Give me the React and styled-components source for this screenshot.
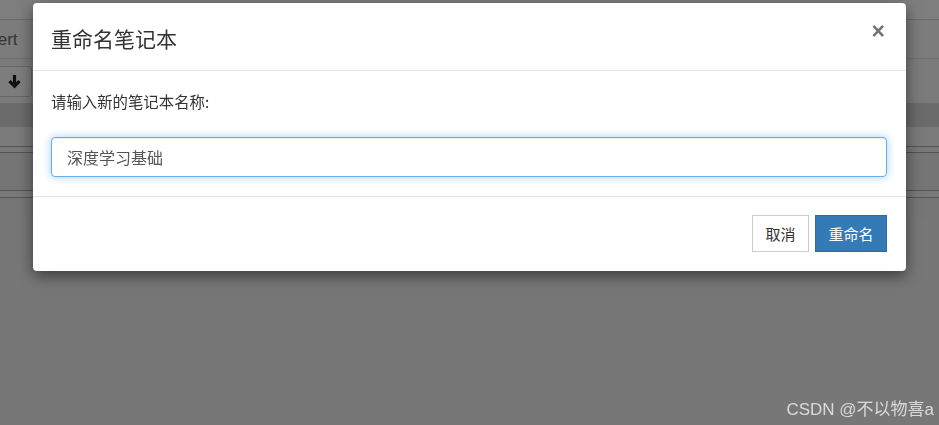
import styled, { createGlobalStyle } from "styled-components"

const GlobalStyle = createGlobalStyle`
    html, body, #root {
        height: 100%;
    }
    body {
        margin: 0;
        font-family: "Liberation Sans", "Noto Sans CJK SC", sans-serif;
        color: #333;
        overflow: hidden;
    }
`

const Page = styled.div`
    position: relative;
    height: 100%;
    background: #eeeeee;
    display: flex;
    flex-direction: column;
`

const TopStrip = styled.div`
    height: 19px;
    background: #fdfdfd;
    border-bottom: 1px solid #d0d0d0;
`

const MenuBar = styled.div`
    height: 38px;
    background: #f8f8f8;
    border-bottom: 1px solid #e0e0e0;
    display: flex;
    align-items: center;
    gap: 24px;
`

const MenuItem = styled.span`
    font-size: 17px;
    color: #6a6a6a;
    padding-top: 2px;
    &:first-child {
        margin-left: -25px;
    }
`

const Toolbar = styled.div`
    height: 44px;
    background: #f6f6f6;
    display: flex;
    align-items: center;
`

const ToolButton = styled.div`
    width: 34px;
    height: 29px;
    margin-left: -4px;
    border: 1px solid #ccc;
    border-radius: 3px;
    background: #fafafa;
    display: flex;
    align-items: center;
    justify-content: center;
`

const Band = styled.div`
    height: ${p => p.h}px;
    background: ${p => p.bg};
    border-bottom: ${p => p.line ? "1px solid #a8a8a8" : "none"};
`

const Backdrop = styled.div`
    position: fixed;
    inset: 0;
    background: rgba(0, 0, 0, 0.5);
`

const Modal = styled.div`
    position: absolute;
    top: 3px;
    left: 33px;
    width: 873px;
    background: #fff;
    border-radius: 4px;
    box-shadow: 0 5px 15px rgba(0, 0, 0, 0.5);
`

const Header = styled.div`
    height: 68px;
    box-sizing: border-box;
    padding: 20px 21px 0 18px;
    border-bottom: 1px solid #e5e5e5;
    display: flex;
    justify-content: space-between;
    align-items: flex-start;
`

const Title = styled.h4`
    margin: 0;
    font-size: 21px;
    font-weight: normal;
    line-height: 30px;
    color: #333;
    font-family: "Noto Sans CJK SC", sans-serif;
`

const Close = styled.button`
    border: 0;
    padding: 0;
    background: none;
    margin-top: -3px;
    font-family: "Liberation Sans", sans-serif;
    font-size: 23px;
    font-weight: bold;
    line-height: 1;
    color: #000;
    opacity: 0.55;
    cursor: pointer;
`

const Body = styled.div`
    padding: 19px 19px 19px 18px;
    border-bottom: 1px solid #e5e5e5;
    display: flex;
    flex-direction: column;
    gap: 25px;
`

const Label = styled.label`
    font-size: 15.4px;
    line-height: 22px;
    color: #333;
    font-family: "Noto Sans CJK SC", sans-serif;
`

const Input = styled.input`
    height: 40px;
    box-sizing: border-box;
    padding: 0 15px;
    border: 1px solid #66afe9;
    border-radius: 4px;
    outline: none;
    font-size: 16px;
    color: #555;
    font-family: "Noto Sans CJK SC", sans-serif;
    box-shadow: inset 0 1px 1px rgba(0, 0, 0, 0.075), 0 0 8px rgba(102, 175, 233, 0.6);
`

const Footer = styled.div`
    padding: 18px 19px 19px;
    display: flex;
    justify-content: flex-end;
    gap: 6px;
`

const Button = styled.button`
    height: 37px;
    box-sizing: border-box;
    padding: 0 12.5px;
    font-size: 15px;
    font-family: "Noto Sans CJK SC", sans-serif;
    border-radius: 0;
    border: 1px solid ${p => p.primary ? "#2e6da4" : "#ccc"};
    background: ${p => p.primary ? "#337ab7" : "#fff"};
    color: ${p => p.primary ? "#fff" : "#333"};
`

const Watermark = styled.div`
    position: absolute;
    right: 5px;
    bottom: 5px;
    font-size: 17px;
    color: rgba(255, 255, 255, 0.72);
    font-family: "Liberation Sans", "Noto Sans CJK SC", sans-serif;
`

function ArrowDown() {
    return (
        <svg width="15" height="15" viewBox="0 0 14 14">
            <path d="M7 1v10M2.3 6.6L7 11.3l4.7-4.7" stroke="#222" strokeWidth="3" fill="none" />
        </svg>
    )
}

function App() {
    return (
        <Page>
            <GlobalStyle />
            <TopStrip />
            <MenuBar>
                <MenuItem>Insert</MenuItem>
            </MenuBar>
            <Toolbar>
                <ToolButton><ArrowDown /></ToolButton>
            </Toolbar>
            <Band h={24} bg="#d6d6d6" />
            <Band h={19} bg="#f4f4f4" line />
            <Band h={5} bg="#f2f2f2" line />
            <Band h={37} bg="#eaeaea" line />
            <Band h={6} bg="#f2f2f2" line />
            <Band h={20} bg="#ececec" />
            <Backdrop />
            <Modal>
                <Header>
                    <Title>重命名笔记本</Title>
                    <Close>×</Close>
                </Header>
                <Body>
                    <Label>请输入新的笔记本名称:</Label>
                    <Input defaultValue="深度学习基础" />
                </Body>
                <Footer>
                    <Button>取消</Button>
                    <Button primary>重命名</Button>
                </Footer>
            </Modal>
            <Watermark>CSDN @不以物喜a</Watermark>
        </Page>
    )
}

export default App
